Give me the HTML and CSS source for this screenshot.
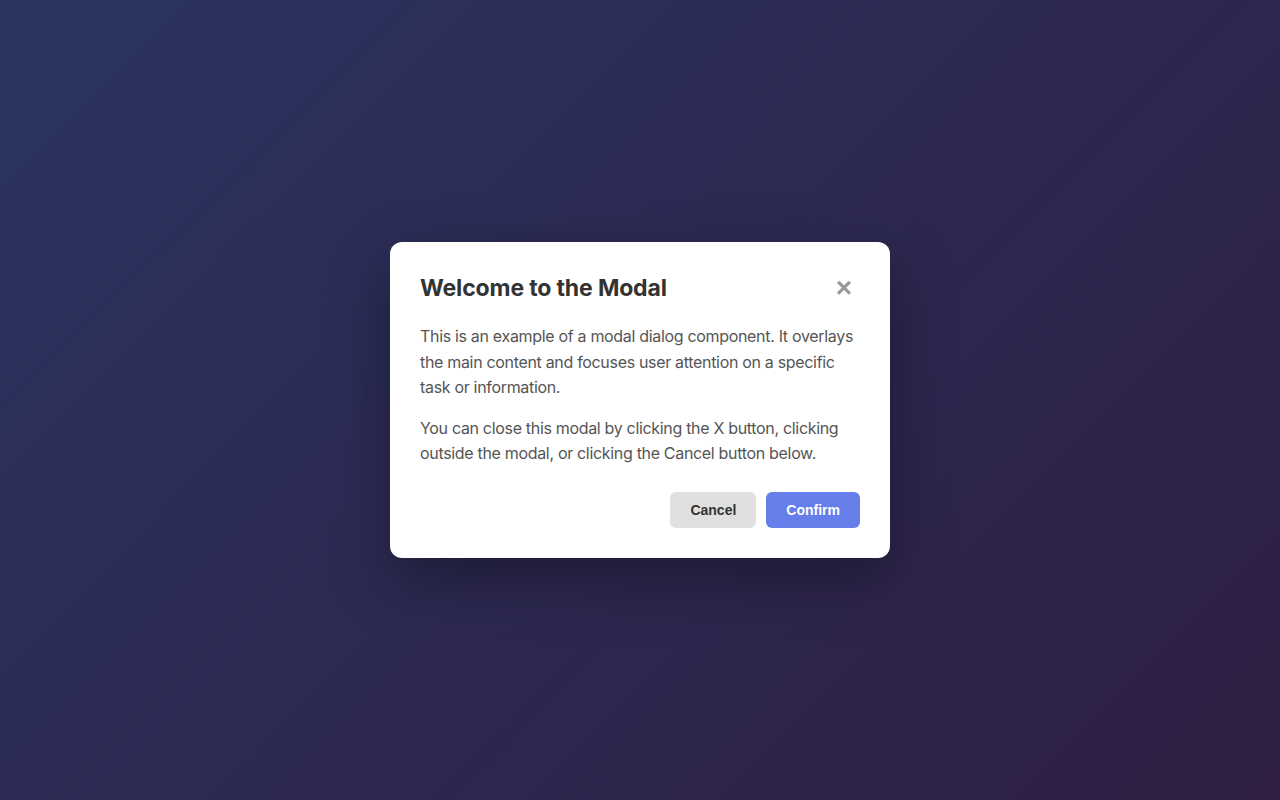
FILE: index.html
```html
<!DOCTYPE html>
<html lang="en">
<head>
<meta charset="utf-8">
<title>Modal</title>
<link rel="stylesheet" href="styles.css">
</head>
<body>
<div class="overlay">
  <div class="modal" role="dialog" aria-labelledby="modal-title">
    <div class="modal-header">
      <h2 id="modal-title" class="modal-title">Welcome to the Modal</h2>
      <button class="close-btn" aria-label="Close">×</button>
    </div>
    <div class="modal-body">
      <p>This is an example of a modal dialog component. It overlays the main content and focuses user attention on a specific task or information.</p>
      <p>You can close this modal by clicking the X button, clicking outside the modal, or clicking the Cancel button below.</p>
    </div>
    <div class="modal-footer">
      <button class="btn btn-cancel">Cancel</button>
      <button class="btn btn-confirm">Confirm</button>
    </div>
  </div>
</div>
</body>
</html>
```

FILE: styles.css
```css
* { box-sizing: border-box; }
html, body { margin: 0; padding: 0; height: 100%; }
body {
  font-family: Inter, "Liberation Sans", Arial, sans-serif;
  background: linear-gradient(135deg, #2a3461 0%, #2f1e42 100%);
}
.overlay {
  width: 100%;
  height: 100vh;
  display: flex;
  align-items: center;
  justify-content: center;
}
.modal {
  width: 500px;
  background: #fff;
  border-radius: 12px;
  padding: 30px;
  box-shadow: 0 20px 60px rgba(0, 0, 0, 0.35);
}
.modal-header {
  display: flex;
  align-items: center;
  justify-content: space-between;
  margin-bottom: 20px;
}
.modal-title {
  margin: 0;
  font-size: 23px;
  font-weight: 700;
  letter-spacing: -0.15px;
  color: #333;
  line-height: 32px;
}
.close-btn {
  border: none;
  background: none;
  padding: 0 8px;
  font-family: "Liberation Sans", Arial, sans-serif;
  font-size: 28px;
  font-weight: 700;
  line-height: 1;
  color: #999;
  cursor: pointer;
}
.modal-body p {
  margin: 0 0 15px;
  font-size: 16px;
  line-height: 1.6;
  letter-spacing: -0.32px;
  color: #555;
}
.modal-body p:last-child { margin-bottom: 0; }
.modal-footer {
  display: flex;
  justify-content: flex-end;
  gap: 10px;
  margin-top: 25px;
}
.btn {
  border: none;
  border-radius: 6px;
  padding: 10px 20px;
  font-family: "Liberation Sans", Arial, sans-serif;
  font-size: 14px;
  font-weight: 700;
  line-height: 16px;
  cursor: pointer;
}
.btn-cancel { background: #e0e0e0; color: #333; }
.btn-confirm { background: #667eea; color: #fff; }
```
